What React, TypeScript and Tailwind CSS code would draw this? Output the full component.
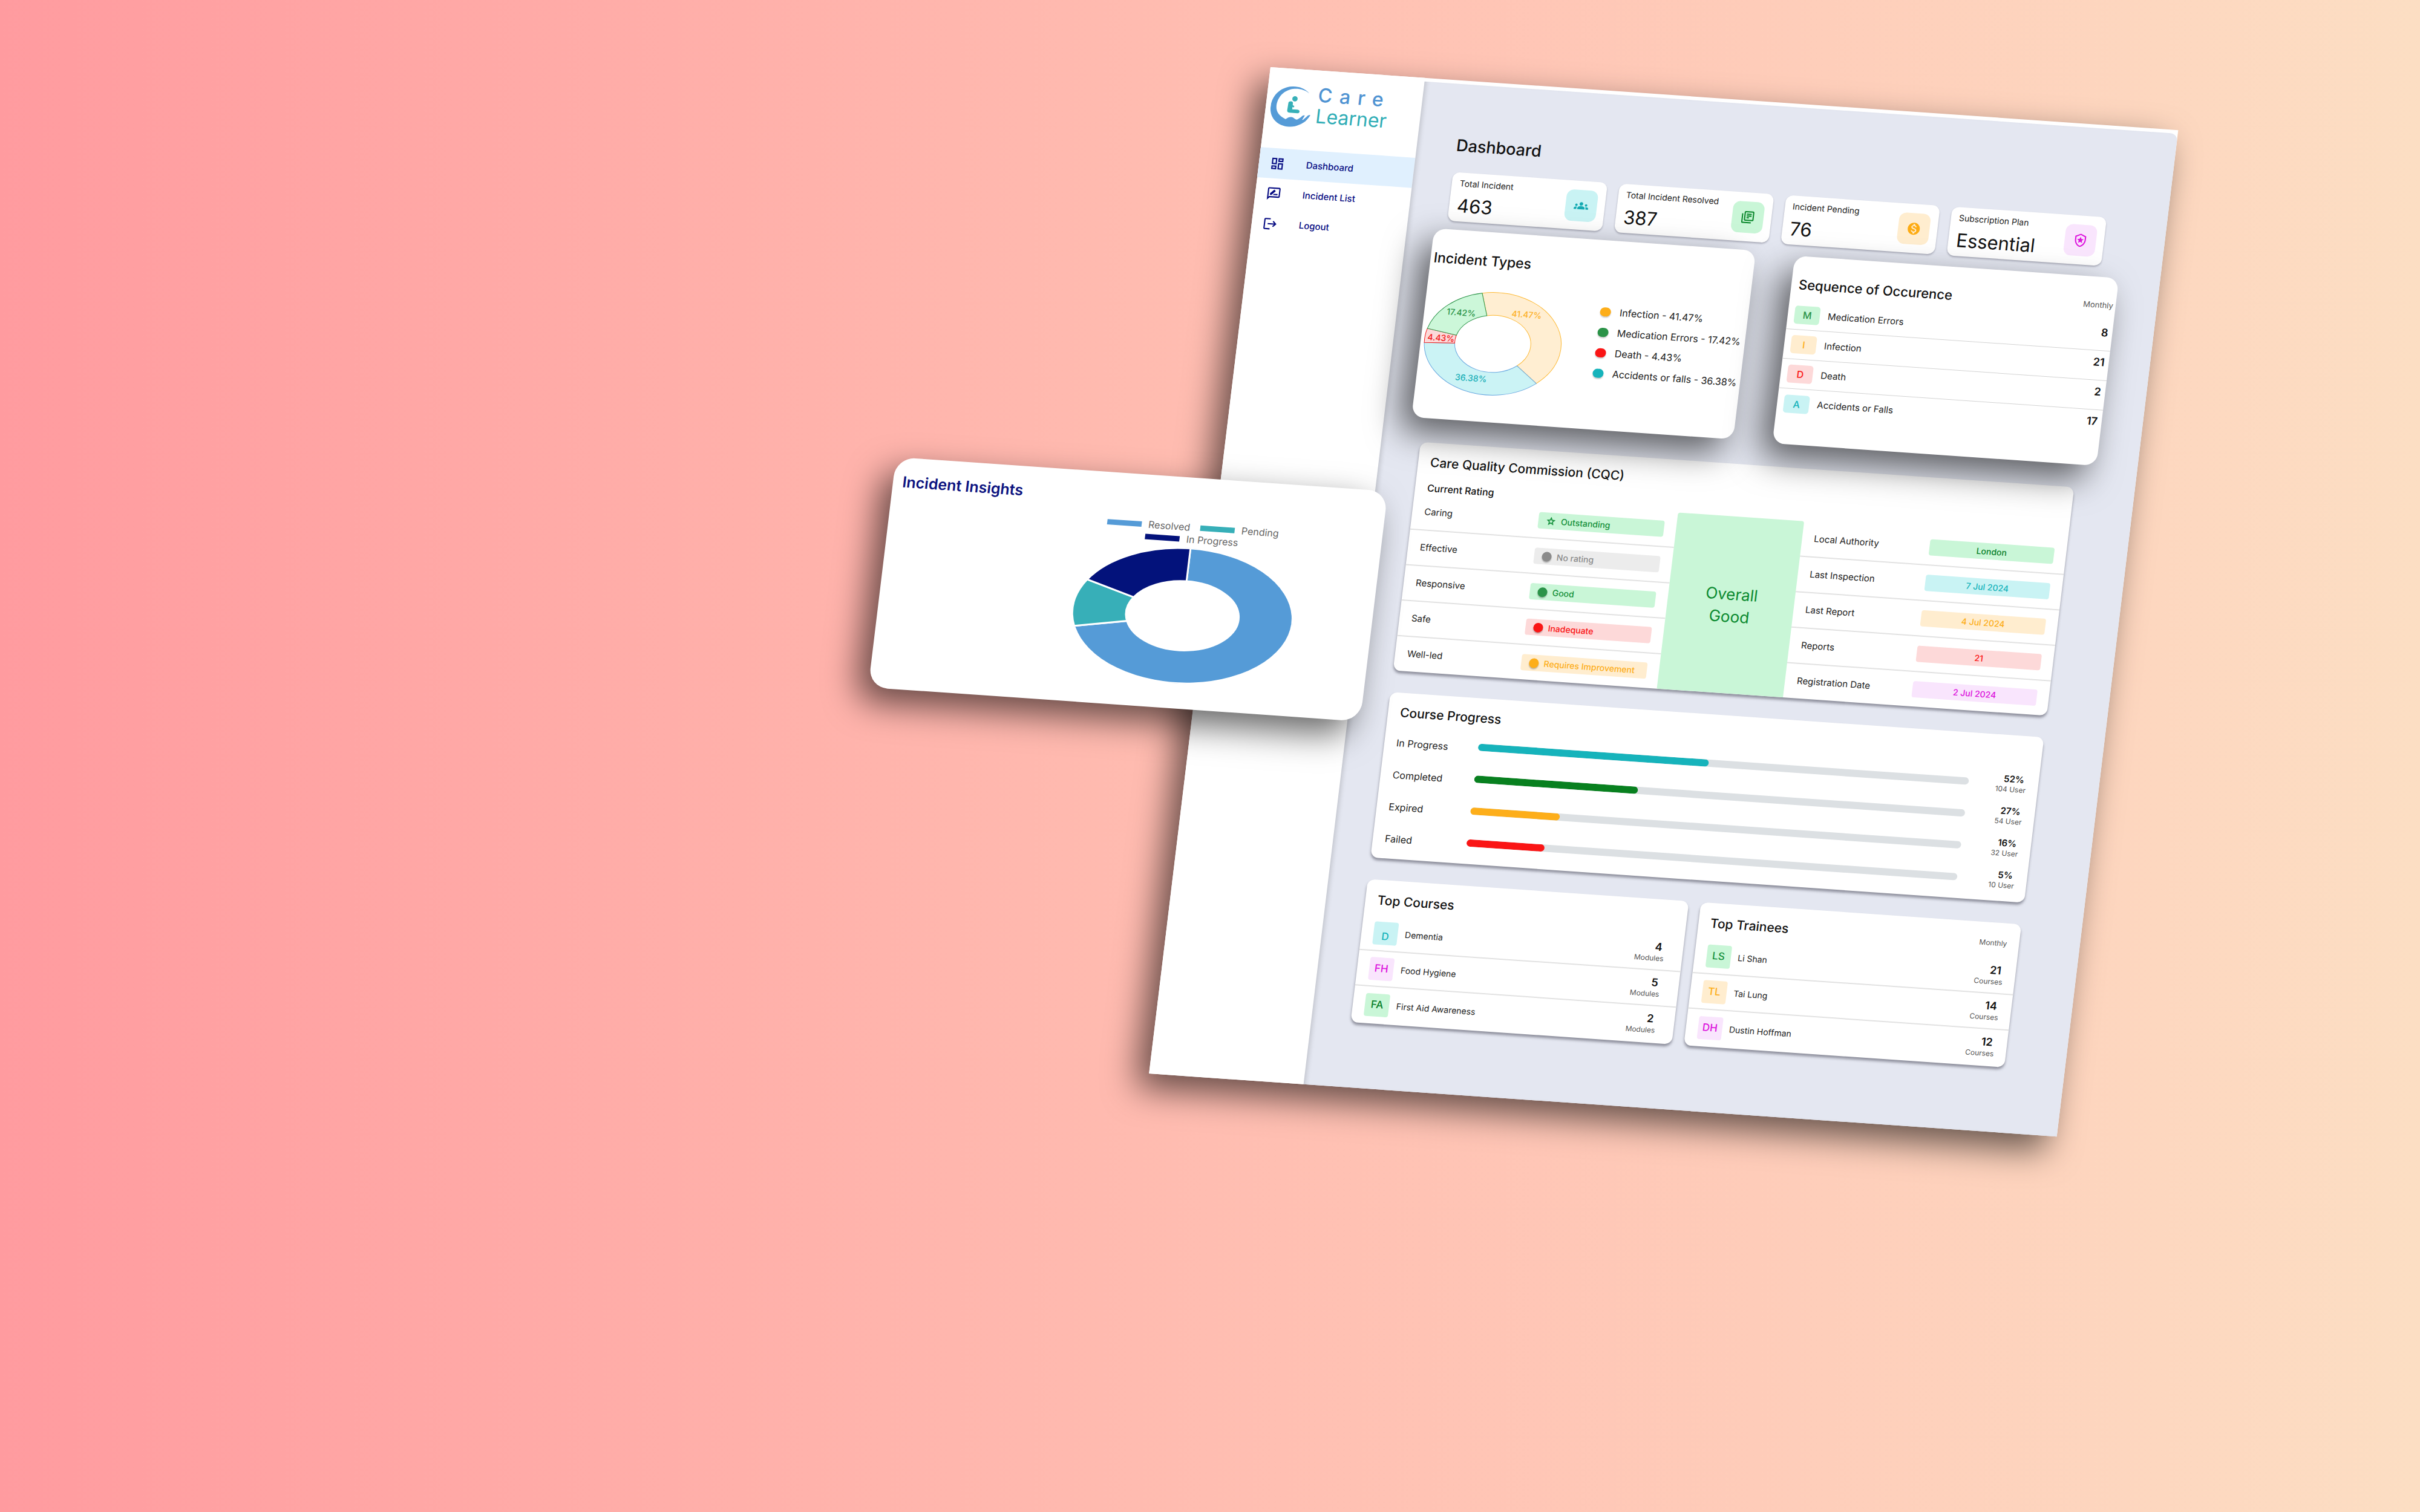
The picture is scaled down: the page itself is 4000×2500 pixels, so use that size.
import React from "react";
import {
  MdGroups,
  MdLogout,
  MdMonetizationOn,
  MdOutlineDashboard,
  MdOutlineLibraryBooks,
  MdOutlineLocalPolice,
  MdOutlineRateReview,
  MdStarOutline,
} from "react-icons/md";

type Slice = { from: number; to: number; fill: string; stroke: string };

/** Point on an ellipse, with the angle in degrees clockwise from the top. */
function point(rx: number, ry: number, deg: number): string {
  const a = (deg * Math.PI) / 180;
  return `${(rx * Math.sin(a)).toFixed(2)} ${(-ry * Math.cos(a)).toFixed(2)}`;
}

function slicePath(rx: number, ry: number, hole: number, s: Slice): string {
  const large = s.to - s.from > 180 ? 1 : 0;
  const ix = rx * hole;
  const iy = ry * hole;
  return `M ${point(rx, ry, s.from)} A ${rx} ${ry} 0 ${large} 1 ${point(rx, ry, s.to)} L ${point(ix, iy, s.to)} A ${ix} ${iy} 0 ${large} 0 ${point(ix, iy, s.from)} Z`;
}

function Logo() {
  return (
    <a href="#home" className="flex items-start gap-2 pl-2 pt-[22px]" aria-label="Care Learner">
      <svg viewBox="0 0 68 68" className="mt-[7px] h-[68px] w-[68px] shrink-0" aria-hidden="true">
        <path
          fill="#559bd7"
          d="M61 10C53 2 42-1 31 .5 12 3 0 18 0 36c0 17 13 30 31 31 8 .4 14-1 19-4 5-2 9-5 12-9 2-3 4-6 5-8-2-1-4 0-6 3l-5 5c-1 1-2 0-1-1l3-6c-2-1-4 0-6 3l-5 4c-4 2-6-3-11-3-4 0-6 2-9 4C17 51 10 45 9.500 35 9 19 20 6 36 4c9-1 18 1 25 6Z"
        />
        <circle cx="38.500" cy="20.500" r="4.400" fill="#37b0b8" />
        <path
          fill="#37b0b8"
          d="M28.500 28c0-2 1.500-3 3.500-3 3 0 4 1 4 3v3l3 1.500-1 2.500-2-1v4h8.500c3 0 4 1.500 4 3s-1 3-3 3H32c-3 0-4-2-4-4Z"
        />
      </svg>
      <span className="flex flex-col">
        <span className="text-[32px] font-medium leading-[38px] tracking-[12px] text-[#4f93d2]">Care</span>
        <span className="text-[32px] leading-[32px] text-[#2fadb6]">Learner</span>
      </span>
    </a>
  );
}

const navItems = [
  { label: "Dashboard", Icon: MdOutlineDashboard, active: true },
  { label: "Incident List", Icon: MdOutlineRateReview, active: false },
  { label: "Logout", Icon: MdLogout, active: false },
];

function Sidebar() {
  return (
    <aside className="w-64 shrink-0 bg-white">
      <Logo />
      <nav className="mt-[36px] flex flex-col">
        {navItems.map(({ label, Icon, active }) => (
          <a
            key={label}
            href="#nav"
            className={`flex h-[50px] items-center gap-[35px] pl-[18px] text-[15px] font-medium text-[#060b82] ${
              active ? "bg-[#e0f0fe]" : ""
            }`}
          >
            <Icon size={25} />
            {label}
          </a>
        ))}
      </nav>
    </aside>
  );
}

const stats = [
  { label: "Total Incident", value: "463", Icon: MdGroups, tile: "bg-[#c9f3f4] text-[#14aab2]" },
  { label: "Total Incident Resolved", value: "387", Icon: MdOutlineLibraryBooks, tile: "bg-[#c9f6d7] text-[#08862a]" },
  { label: "Incident Pending", value: "76", Icon: MdMonetizationOn, tile: "bg-[#ffedcf] text-[#fdab12]" },
  { label: "Subscription Plan", value: "Essential", Icon: MdOutlineLocalPolice, tile: "bg-[#f9e5fd] text-[#dc12dc]" },
];

function Stats() {
  return (
    <section className="mt-[26px] grid grid-cols-4 gap-5">
      {stats.map(({ label, value, Icon, tile }) => (
        <article
          key={label}
          className="flex h-[81px] items-center justify-between rounded-[12px] bg-white px-[13px] shadow-[0_2px_3px_rgba(60,60,80,0.35)]"
        >
          <div className="min-w-0 whitespace-nowrap text-[#111]">
            <h2 className="text-[14px] leading-[20px] text-[#222]">{label}</h2>
            <p className="mt-2 text-[31px] leading-[38px]">{value}</p>
          </div>
          <div className={`flex h-[52px] w-[52px] shrink-0 items-center justify-center rounded-[12px] ${tile}`}>
            <Icon size={24} />
          </div>
        </article>
      ))}
    </section>
  );
}

const typeSlices: Slice[] = [
  { from: -14, to: 135.300, fill: "#ffeed2", stroke: "#fdb934" },
  { from: 135.300, to: 266.300, fill: "#cbf3f5", stroke: "#6aa9e0" },
  { from: 266.300, to: 282.300, fill: "#fdd9d9", stroke: "#f01818" },
  { from: 282.300, to: 346, fill: "#ccf7d9", stroke: "#2b9348" },
];

const typeLabels = [
  { text: "41.47%", x: 50, y: -47, fill: "#fdb22a" },
  { text: "17.42%", x: -58, y: -43, fill: "#2b9348" },
  { text: "4.43%", x: -86, y: 1, fill: "#f01818" },
  { text: "36.38%", x: -29, y: 64, fill: "#1bb0b8" },
];

const typeLegend = [
  { text: "Infection - 41.47%", dot: "bg-[#fdae1a]" },
  { text: "Medication Errors - 17.42%", dot: "bg-[#2b9348]" },
  { text: "Death - 4.43%", dot: "bg-[#fa1515]" },
  { text: "Accidents or falls - 36.38%", dot: "bg-[#16b3bb]" },
];

function IncidentTypes() {
  return (
    <section className="h-[314px] w-[47%] rounded-[20px] bg-white pl-[5px] pr-[6px] pt-[34px] shadow-[-18px_24px_56px_rgba(0,0,0,0.6)]">
      <h2 className="text-[23px] font-medium leading-[28px] text-[#111]">Incident Types</h2>
      <div className="mt-[36px] flex items-start justify-between">
        <svg viewBox="-114 -86 228 172" className="h-[172px] w-[228px] shrink-0" role="img" aria-label="Incident types">
          {typeSlices.map((s) => (
            <path key={s.from} d={slicePath(113, 85, 0.556, s)} fill={s.fill} stroke={s.stroke} strokeWidth="1" />
          ))}
          {typeLabels.map((l) => (
            <text key={l.text} x={l.x} y={l.y} fill={l.fill} textAnchor="middle" className="text-[14px] font-medium">
              {l.text}
            </text>
          ))}
        </svg>
        <ul className="mt-[3px] text-[16px] text-[#222]">
          {typeLegend.map((l) => (
            <li key={l.text} className="flex h-[34px] items-center gap-[14px] whitespace-nowrap">
              <span className={`h-[15px] w-[18px] rounded-full shadow-[0_2px_2px_rgba(0,0,0,0.2)] ${l.dot}`} />
              {l.text}
            </li>
          ))}
        </ul>
      </div>
    </section>
  );
}

const sequence = [
  { letter: "M", name: "Medication Errors", value: 8, tile: "bg-[#c9f6d7] text-[#2b9348]" },
  { letter: "I", name: "Infection", value: 21, tile: "bg-[#ffedcf] text-[#fdae1a]" },
  { letter: "D", name: "Death", value: 2, tile: "bg-[#fdd9d9] text-[#fa1515]" },
  { letter: "A", name: "Accidents or Falls", value: 17, tile: "bg-[#c9f3f4] text-[#16b3bb]" },
];

function SequenceOfOccurence() {
  return (
    <section className="mt-[4px] h-[312px] w-[47.3%] rounded-[20px] bg-white pt-[33px] shadow-[-18px_24px_56px_rgba(0,0,0,0.6)]">
      <div className="flex items-center justify-between pl-[12px] pr-[4px]">
        <h2 className="text-[22px] font-medium leading-[28px] text-[#111]">Sequence of Occurence</h2>
        <span className="text-[13px] text-[#555]">Monthly</span>
      </div>
      <ul className="mt-[12px]">
        {sequence.map((s, i) => (
          <li
            key={s.name}
            className={`flex h-[49px] items-center pl-[11px] pr-[7px] ${i < 3 ? "border-b border-[#d3d3d3]" : ""}`}
          >
            <span className={`flex h-[30px] w-[42px] items-center justify-center rounded-[5px] text-[16px] font-medium ${s.tile}`}>
              {s.letter}
            </span>
            <span className="ml-[13px] flex-1 text-[15px] text-[#222]">{s.name}</span>
            <span className="pb-3 text-[18px] font-semibold text-[#111]">{s.value}</span>
          </li>
        ))}
      </ul>
    </section>
  );
}

const ratings = [
  { name: "Caring", rating: "Outstanding", pill: "bg-[#c9f6d7] text-[#16913c]", dot: "" },
  { name: "Effective", rating: "No rating", pill: "bg-[#ececec] text-[#8b8b8b]", dot: "bg-[#8b8b8b]" },
  { name: "Responsive", rating: "Good", pill: "bg-[#c9f6d7] text-[#16913c]", dot: "bg-[#2b9348]" },
  { name: "Safe", rating: "Inadequate", pill: "bg-[#fdd9d9] text-[#fa1515]", dot: "bg-[#fa1515]" },
  { name: "Well-led", rating: "Requires Improvement", pill: "bg-[#ffedcf] text-[#fdae1a]", dot: "bg-[#fdae1a]" },
];

const facts = [
  { name: "Local Authority", value: "London", pill: "bg-[#c9f6d7] text-[#08802a]" },
  { name: "Last Inspection", value: "7 Jul 2024", pill: "bg-[#c9f3f4] text-[#16b3bb]" },
  { name: "Last Report", value: "4 Jul 2024", pill: "bg-[#ffedcf] text-[#fdae1a]" },
  { name: "Reports", value: "21", pill: "bg-[#fdd9d9] text-[#fa1515]" },
  { name: "Registration Date", value: "2 Jul 2024", pill: "bg-[#f9e5fd] text-[#dc12dc]" },
];

const card = "rounded-[12px] bg-white shadow-[0_4px_4px_rgba(60,60,75,0.5)]";
const cardTitle = "text-[21px] font-medium leading-[28px] text-[#111]";

function CareQuality() {
  return (
    <section className={`mt-[38px] overflow-hidden pt-[19px] ${card}`}>
      <h2 className={`px-5 ${cardTitle}`}>Care Quality Commission (CQC)</h2>
      <h3 className="mt-4 px-5 text-[16px] font-medium leading-6 text-[#111]">Current Rating</h3>
      <div className="grid h-[293px] grid-cols-[21fr_10fr_21fr]">
        <ul className="flex flex-col">
          {ratings.map((r, i) => (
            <li
              key={r.name}
              className={`flex flex-1 items-center justify-between px-5 text-[15px] text-[#222] ${
                i < 4 ? "border-b-2 border-[#e2e2e2]" : ""
              }`}
            >
              {r.name}
              <span className={`flex h-[27px] w-[208px] items-center gap-2 whitespace-nowrap rounded-[4px] pl-[13px] text-[14px] font-medium ${r.pill}`}>
                {r.dot ? (
                  <span className={`h-4 w-4 shrink-0 rounded-full shadow-[0_2px_2px_rgba(0,0,0,0.25)] ${r.dot}`} />
                ) : (
                  <MdStarOutline size={16} stroke="currentColor" strokeWidth={1} />
                )}
                {r.rating}
              </span>
            </li>
          ))}
        </ul>
        <div className="flex flex-col items-center justify-center rounded-t-[4px] bg-[#c9f6d7] text-[26px] leading-[37px] text-[#0b8a30]">
          <span>Overall</span>
          <span>Good</span>
        </div>
        <ul className="flex flex-col">
          {facts.map((f, i) => (
            <li
              key={f.name}
              className={`flex flex-1 items-center justify-between px-5 text-[15px] text-[#222] ${
                i < 4 ? "border-b-2 border-[#e2e2e2]" : ""
              }`}
            >
              {f.name}
              <span className={`flex h-[27px] w-[206px] items-center justify-center rounded-[4px] text-[14px] font-medium ${f.pill}`}>
                {f.value}
              </span>
            </li>
          ))}
        </ul>
      </div>
    </section>
  );
}

const progress = [
  { name: "In Progress", percent: "52%", users: "104 User", fill: 47, color: "bg-[#16b3bb]" },
  { name: "Completed", percent: "27%", users: "54 User", fill: 33.300, color: "bg-[#08801f]" },
  { name: "Expired", percent: "16%", users: "32 User", fill: 18.200, color: "bg-[#fdae1a]" },
  { name: "Failed", percent: "5%", users: "10 User", fill: 15.900, color: "bg-[#fa1515]" },
];

function CourseProgress() {
  return (
    <section className={`mt-9 px-5 pb-[9px] pt-[19px] ${card}`}>
      <h2 className={cardTitle}>Course Progress</h2>
      <ul className="mt-[7px]">
        {progress.map((p) => (
          <li key={p.name} className="flex h-[53px] items-center">
            <span className="w-[135px] pt-1 text-[16px] text-[#222]">{p.name}</span>
            <div
              role="progressbar"
              aria-label={p.name}
              aria-valuenow={p.fill}
              className="h-[12px] flex-1 overflow-hidden rounded-full bg-[#dce0e3]"
            >
              <div className={`h-full rounded-full ${p.color}`} style={{ width: `${p.fill}%` }} />
            </div>
            <div className="w-[95px] text-right">
              <p className="pr-1 text-[15px] font-semibold leading-[17px] text-[#111]">{p.percent}</p>
              <p className="text-[12px] leading-[17px] text-[#555]">{p.users}</p>
            </div>
          </li>
        ))}
      </ul>
    </section>
  );
}

type Entry = { initials: string; name: string; value: number; tile: string };

const courses: Entry[] = [
  { initials: "D", name: "Dementia", value: 4, tile: "items-end bg-[#c9f3f4] text-[#16b3bb]" },
  { initials: "FH", name: "Food Hygiene", value: 5, tile: "items-center bg-[#f9e5fd] text-[#dc12dc]" },
  { initials: "FA", name: "First Aid Awareness", value: 2, tile: "items-center bg-[#c9f6d7] text-[#08802a]" },
];

const trainees: Entry[] = [
  { initials: "LS", name: "Li Shan", value: 21, tile: "items-center bg-[#c9f6d7] text-[#16913c]" },
  { initials: "TL", name: "Tai Lung", value: 14, tile: "items-center bg-[#ffedcf] text-[#fdae1a]" },
  { initials: "DH", name: "Dustin Hoffman", value: 12, tile: "items-center bg-[#f9e5fd] text-[#dc12dc]" },
];

function Ranking({ title, note, unit, entries, end }: { title: string; note?: string; unit: string; entries: Entry[]; end: string }) {
  return (
    <section className={`pb-[2px] pt-[20px] ${card}`}>
      <div className="flex items-center justify-between px-5">
        <h2 className={cardTitle}>{title}</h2>
        {note && <span className="text-[12px] text-[#555]">{note}</span>}
      </div>
      <ul className="mt-[11px]">
        {entries.map((e, i) => (
          <li
            key={e.name}
            className={`flex h-[59px] items-center pl-5 ${end} ${i < entries.length - 1 ? "border-b-2 border-[#e2e2e2]" : ""}`}
          >
            <span className={`flex h-[38px] w-[40px] justify-center rounded-[4px] text-[17px] font-medium ${e.tile}`}>
              {e.initials}
            </span>
            <span className="ml-3 flex-1 text-[14px] text-[#222]">{e.name}</span>
            <span className="text-right">
              <span className="block pr-1 text-[18px] font-semibold leading-[20px] text-[#111]">{e.value}</span>
              <span className="block text-[12px] leading-[17px] text-[#555]">{unit}</span>
            </span>
          </li>
        ))}
      </ul>
    </section>
  );
}

const insightSlices: Slice[] = [
  { from: 0, to: 255, fill: "#559bd7", stroke: "#fff" },
  { from: 255, to: 296, fill: "#37afb8", stroke: "#fff" },
  { from: 296, to: 360, fill: "#03127b", stroke: "#fff" },
];

const insightLegend = [
  { name: "Resolved", swatch: "bg-[#559bd7]" },
  { name: "Pending", swatch: "bg-[#37afb8]" },
  { name: "In Progress", swatch: "bg-[#03127b]" },
];

function IncidentInsights() {
  return (
    <section className="absolute left-[-35.8%] top-[686px] h-[383px] w-[54.2%] rounded-[32px] bg-white pt-[24px] shadow-[-18px_24px_56px_rgba(0,0,0,0.6)]">
      <h2 className="pl-4 text-[25px] font-semibold leading-[32px] text-[#0b127f]">Incident Insights</h2>
      <div className="mt-[16px] flex flex-col items-center pl-[190px]">
        <ul className="flex w-[340px] flex-wrap justify-center gap-x-[17px] text-[16px] leading-[20px] text-[#666]">
          {insightLegend.map((l) => (
            <li key={l.name} className="flex items-center gap-[11px]">
              <span className={`h-[9px] w-[57px] ${l.swatch}`} />
              {l.name}
            </li>
          ))}
        </ul>
        <svg viewBox="-182 -112 364 224" className="mt-[5px] h-[224px] w-[364px]" role="img" aria-label="Incident insights">
          {insightSlices.map((s) => (
            <path key={s.from} d={slicePath(182, 112, 0.512, s)} fill={s.fill} stroke={s.stroke} strokeWidth="3" />
          ))}
        </svg>
      </div>
    </section>
  );
}

export default function App() {
  return (
    <div className="min-h-screen w-full overflow-hidden bg-linear-to-r from-[#ff9b9f] to-[#fcdec3] pb-40 pt-[111px] font-['Inter',sans-serif]">
      <div className="relative ml-[52.5%] flex w-[37.6%] origin-top-left bg-white shadow-[-18px_24px_56px_rgba(0,0,0,0.6)] [transform:rotate(3.97deg)_skewX(-2.91deg)]">
        <Sidebar />
        <main className="mt-[6px] min-w-0 flex-1 rounded-tr-[12px] bg-[#e4e7f1] pb-[108px] pl-[65px] pr-[100px] pt-[84px] shadow-[inset_8px_0_8px_-6px_rgba(0,0,0,0.18)]">
          <h1 className="text-[27px] font-medium leading-[36px] text-[#111]">Dashboard</h1>
          <Stats />
          <div className="-ml-5 -mr-8 mt-[14px] flex items-start justify-between">
            <IncidentTypes />
            <SequenceOfOccurence />
          </div>
          <CareQuality />
          <CourseProgress />
          <div className="mt-9 grid grid-cols-2 gap-5">
            <Ranking title="Top Courses" unit="Modules" entries={courses} end="pr-[30px]" />
            <Ranking title="Top Trainees" note="Monthly" unit="Courses" entries={trainees} end="pr-5" />
          </div>
        </main>
        <IncidentInsights />
      </div>
    </div>
  );
}
